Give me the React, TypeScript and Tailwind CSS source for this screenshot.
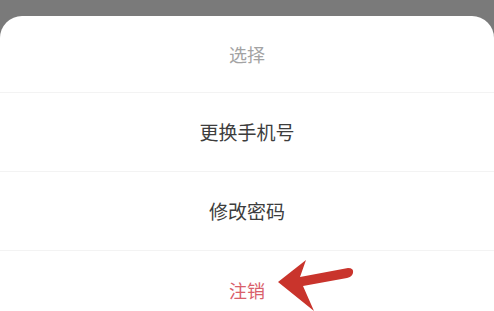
import React from 'react';

const items = ['更换手机号', '修改密码'];

export default function App() {
  return (
    <div
      className="w-[494px] h-[311px] bg-[#7a7a7a] pt-[16px] overflow-hidden"
      style={{ fontFamily: '"Noto Sans CJK SC", "Noto Sans", sans-serif' }}
    >
      <div className="relative bg-white rounded-t-[22px] flex flex-col">
        {/* Titre */}
        <div className="h-[77px] shrink-0 flex items-center justify-center border-b border-[#f3f3f3] text-[18px] text-[#a3a3a3]">
          选择
        </div>

        {items.map((label) => (
          <div
            key={label}
            className="h-[79px] shrink-0 flex items-center justify-center border-b border-[#f3f3f3] text-[19px] text-[#3d3d3d]"
          >
            {label}
          </div>
        ))}

        <div className="h-[79px] shrink-0 flex items-center justify-center text-[18px] text-[#d9606a]">
          注销
        </div>

        {/* Flèche rouge */}
        <svg
          className="absolute left-[270px] top-[238px]"
          width="90"
          height="66"
          viewBox="0 0 90 66"
        >
          <path
            d="M8 28 L36 6 L30 23 L78 14 Q84 14 83 19 Q82 23 77 24 L33 32 L44 57 Z"
            fill="#c9342c"
          />
        </svg>
      </div>
    </div>
  );
}
